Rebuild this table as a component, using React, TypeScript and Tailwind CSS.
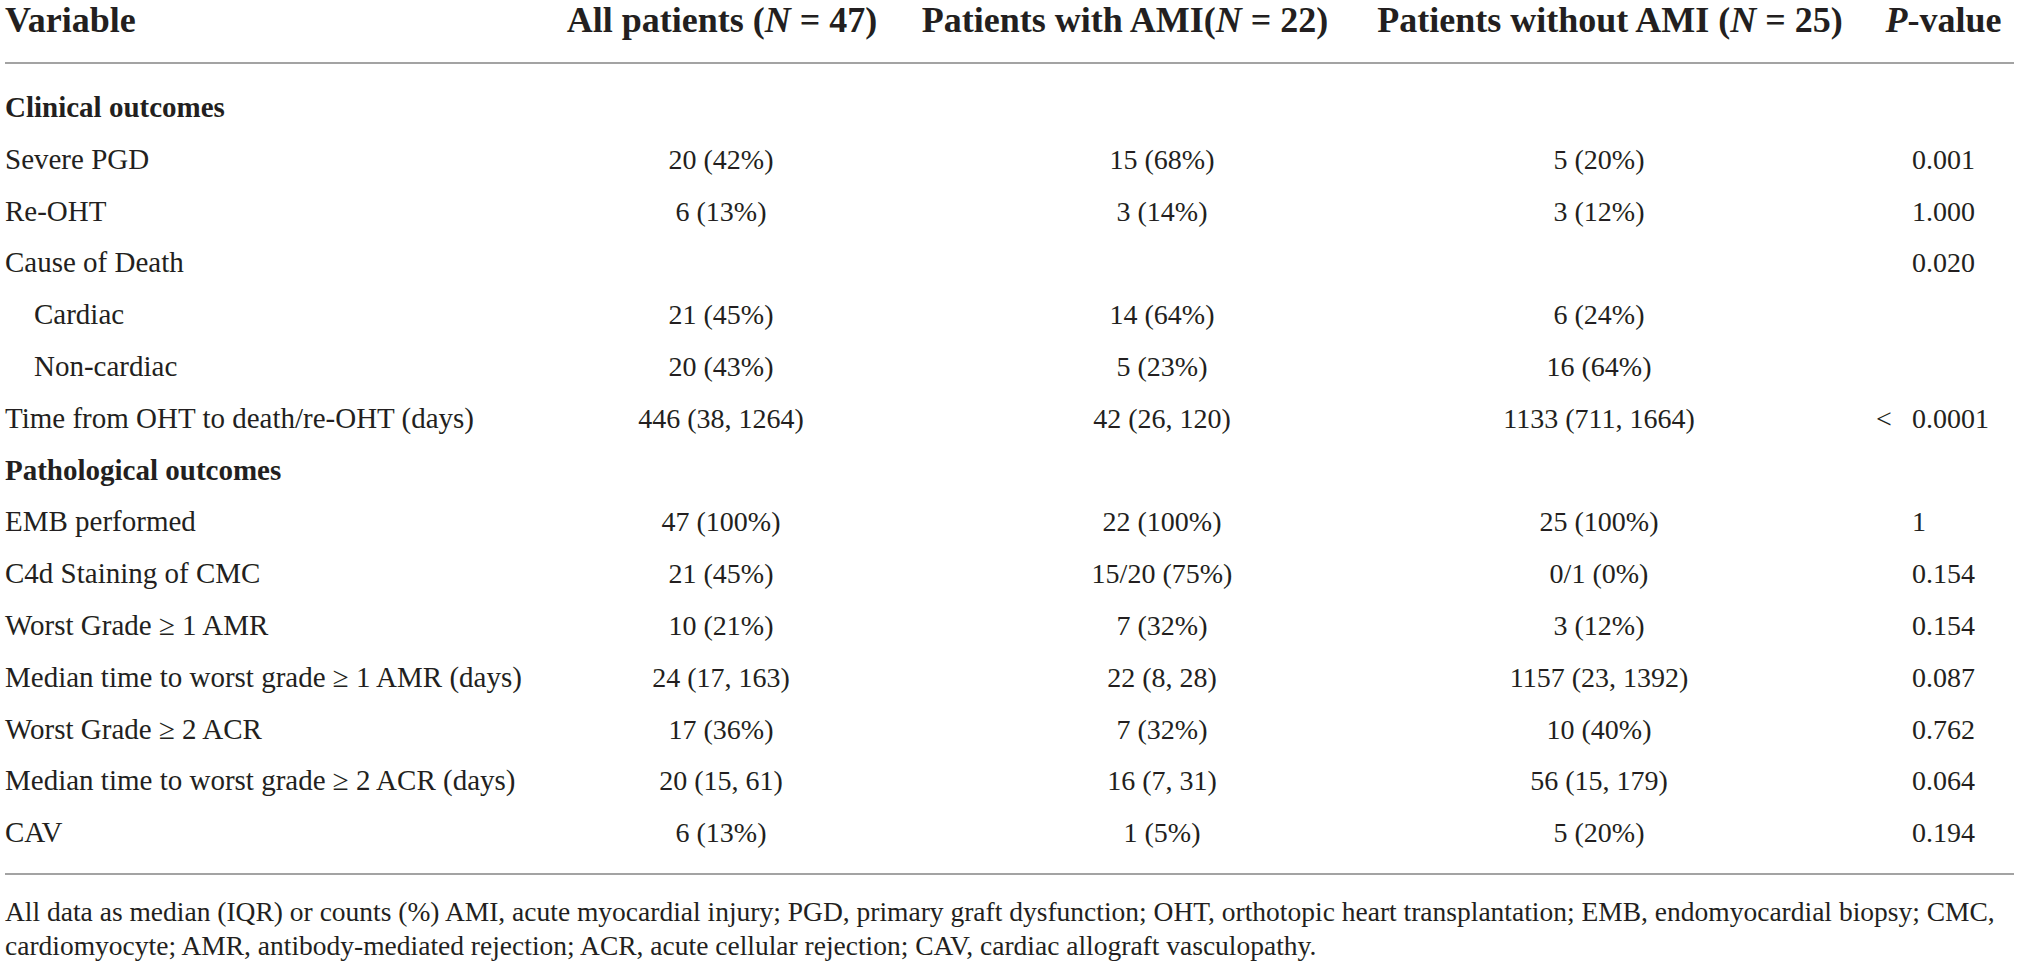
type Row = {
  label: string;
  all?: string;
  ami?: string;
  noAmi?: string;
  p?: string;
  lt?: boolean;
  indent?: boolean;
  section?: boolean;
};

const rows: Row[] = [
  { label: "Clinical outcomes", section: true },
  { label: "Severe PGD", all: "20 (42%)", ami: "15 (68%)", noAmi: "5 (20%)", p: "0.001" },
  { label: "Re-OHT", all: "6 (13%)", ami: "3 (14%)", noAmi: "3 (12%)", p: "1.000" },
  { label: "Cause of Death", p: "0.020" },
  { label: "Cardiac", all: "21 (45%)", ami: "14 (64%)", noAmi: "6 (24%)", indent: true },
  { label: "Non-cardiac", all: "20 (43%)", ami: "5 (23%)", noAmi: "16 (64%)", indent: true },
  { label: "Time from OHT to death/re-OHT (days)", all: "446 (38, 1264)", ami: "42 (26, 120)", noAmi: "1133 (711, 1664)", p: "0.0001", lt: true },
  { label: "Pathological outcomes", section: true },
  { label: "EMB performed", all: "47 (100%)", ami: "22 (100%)", noAmi: "25 (100%)", p: "1" },
  { label: "C4d Staining of CMC", all: "21 (45%)", ami: "15/20 (75%)", noAmi: "0/1 (0%)", p: "0.154" },
  { label: "Worst Grade ≥ 1 AMR", all: "10 (21%)", ami: "7 (32%)", noAmi: "3 (12%)", p: "0.154" },
  { label: "Median time to worst grade ≥ 1 AMR (days)", all: "24 (17, 163)", ami: "22 (8, 28)", noAmi: "1157 (23, 1392)", p: "0.087" },
  { label: "Worst Grade ≥ 2 ACR", all: "17 (36%)", ami: "7 (32%)", noAmi: "10 (40%)", p: "0.762" },
  { label: "Median time to worst grade ≥ 2 ACR (days)", all: "20 (15, 61)", ami: "16 (7, 31)", noAmi: "56 (15, 179)", p: "0.064" },
  { label: "CAV", all: "6 (13%)", ami: "1 (5%)", noAmi: "5 (20%)", p: "0.194" },
];

function N() {
  return <i>N</i>;
}

export default function App() {
  return (
    <div className="w-[2019px] h-[965px] bg-white px-[5px] text-[#231f20] font-['Liberation_Serif',serif] overflow-hidden">
      <div className="grid grid-cols-[535px_364px_442px_528px_139px] h-[62px] pt-[2px] text-[36px] leading-[36px] font-bold whitespace-nowrap">
        <div>Variable</div>
        <div className="text-center">All patients (<N /> = 47)</div>
        <div className="text-center">Patients with AMI(<N /> = 22)</div>
        <div className="text-center">Patients without AMI (<N /> = 25)</div>
        <div className="text-center"><i>P</i>-value</div>
      </div>
      <div className="h-[2px] bg-[#a3a3a3]" />

      <div className="mt-[18px] text-[28px] whitespace-nowrap">
        {rows.map(r => (
          <div key={r.label} className="grid grid-cols-[535px_362px_520px_354px_237px] h-[51.8px] leading-[51.8px]">
            <div className={`text-[29px] ${r.section ? "font-bold" : r.indent ? "pl-[29px]" : ""}`}>{r.label}</div>
            <div className="text-center">{r.all}</div>
            <div className="text-center">{r.ami}</div>
            <div className="text-center">{r.noAmi}</div>
            <div className="pl-[136px]">
              {r.lt && <span className="inline-block w-[36px] -ml-[36px]">&lt;</span>}
              {r.p}
            </div>
          </div>
        ))}
      </div>

      <div className="mt-[14px] h-[2px] bg-[#a3a3a3]" />
      <div className="mt-[20px] text-[27.5px] leading-[34px] whitespace-nowrap">
        <div>
          All data as median (IQR) or counts (%) AMI, acute myocardial injury; PGD, primary graft dysfunction; OHT, orthotopic heart transplantation; EMB, endomyocardial biopsy; CMC,
        </div>
        <div>cardiomyocyte; AMR, antibody-mediated rejection; ACR, acute cellular rejection; CAV, cardiac allograft vasculopathy.</div>
      </div>
    </div>
  );
}
